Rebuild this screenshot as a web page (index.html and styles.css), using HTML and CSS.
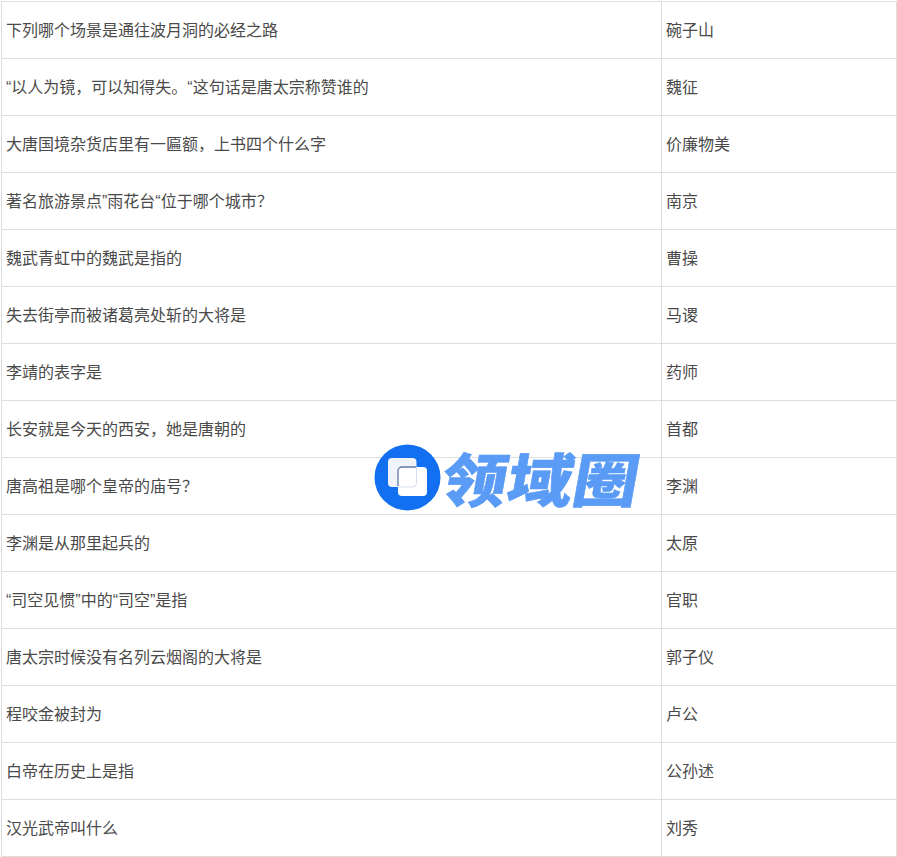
FILE: index.html
```html
<!DOCTYPE html>
<html lang="zh-CN">
<head>
<meta charset="utf-8">
<title>领域圈</title>
<link rel="stylesheet" href="styles.css">
</head>
<body>
<main class="page">
<table class="qa">
<tbody>
<tr><td>下列哪个场景是通往波月洞的必经之路</td><td>碗子山</td></tr>
<tr><td>“以人为镜，可以知得失。“这句话是唐太宗称赞谁的</td><td>魏征</td></tr>
<tr><td>大唐国境杂货店里有一匾额，上书四个什么字</td><td>价廉物美</td></tr>
<tr><td>著名旅游景点”雨花台“位于哪个城市？</td><td>南京</td></tr>
<tr><td>魏武青虹中的魏武是指的</td><td>曹操</td></tr>
<tr><td>失去街亭而被诸葛亮处斩的大将是</td><td>马谡</td></tr>
<tr><td>李靖的表字是</td><td>药师</td></tr>
<tr><td>长安就是今天的西安，她是唐朝的</td><td>首都</td></tr>
<tr><td>唐高祖是哪个皇帝的庙号？</td><td>李渊</td></tr>
<tr><td>李渊是从那里起兵的</td><td>太原</td></tr>
<tr><td>“司空见惯”中的“司空”是指</td><td>官职</td></tr>
<tr><td>唐太宗时候没有名列云烟阁的大将是</td><td>郭子仪</td></tr>
<tr><td>程咬金被封为</td><td>卢公</td></tr>
<tr><td>白帝在历史上是指</td><td>公孙述</td></tr>
<tr><td>汉光武帝叫什么</td><td>刘秀</td></tr>
</tbody>
</table>
<div class="logo">
<svg class="logo-mark" width="67" height="67" viewBox="0 0 67 67">
<circle cx="33.5" cy="33.5" r="33" fill="#1270f0"/>
<rect x="14" y="14" width="28.500" height="29" rx="4" fill="#f0f3f9"/>
<rect x="24" y="23" width="29" height="29" rx="4" fill="#ffffff"/>
<path d="M24 42V27a4 4 0 0 1 4-4h14" fill="none" stroke="#5f78b0" stroke-width="1.3"/>
<path d="M42.500 23v16a4 4 0 0 1-4 4H24" fill="none" stroke="#d5deee" stroke-width="1"/>
</svg>
<span class="logo-text">领域圈</span>
</div>
</main>
</body>
</html>
```
FILE: styles.css
```css
html, body {
  margin: 0;
  padding: 0;
  background: #fff;
}
.page {
  position: relative;
  width: 897px;
  height: 857px;
  overflow: hidden;
}
.qa {
  width: 896px;
  margin-left: 1px;
  margin-top: 1px;
  border-collapse: collapse;
  table-layout: fixed;
  font-family: "Liberation Sans", "Noto Sans CJK SC", sans-serif;
  font-size: 16px;
  color: #4a4a4a;
}
.qa td {
  height: 57px;
  box-sizing: border-box;
  padding: 0 4px 2px;
  border: 1px solid #dedede;
  vertical-align: middle;
}
.qa td:first-child {
  width: 660px;
}
.logo {
  position: absolute;
  left: 374px;
  top: 444px;
  display: flex;
  align-items: center;
  gap: 2px;
}
.logo-mark {
  display: block;
  flex: none;
}
.logo-text {
  font-family: "Noto Sans CJK SC", sans-serif;
  font-weight: 900;
  font-size: 58px;
  line-height: 67px;
  letter-spacing: 0;
  color: #5a9bf6;
  -webkit-text-stroke: 0.5px #5a9bf6;
  transform: scaleX(1.13) skewX(-9deg);
  transform-origin: left center;
  white-space: nowrap;
}
```
